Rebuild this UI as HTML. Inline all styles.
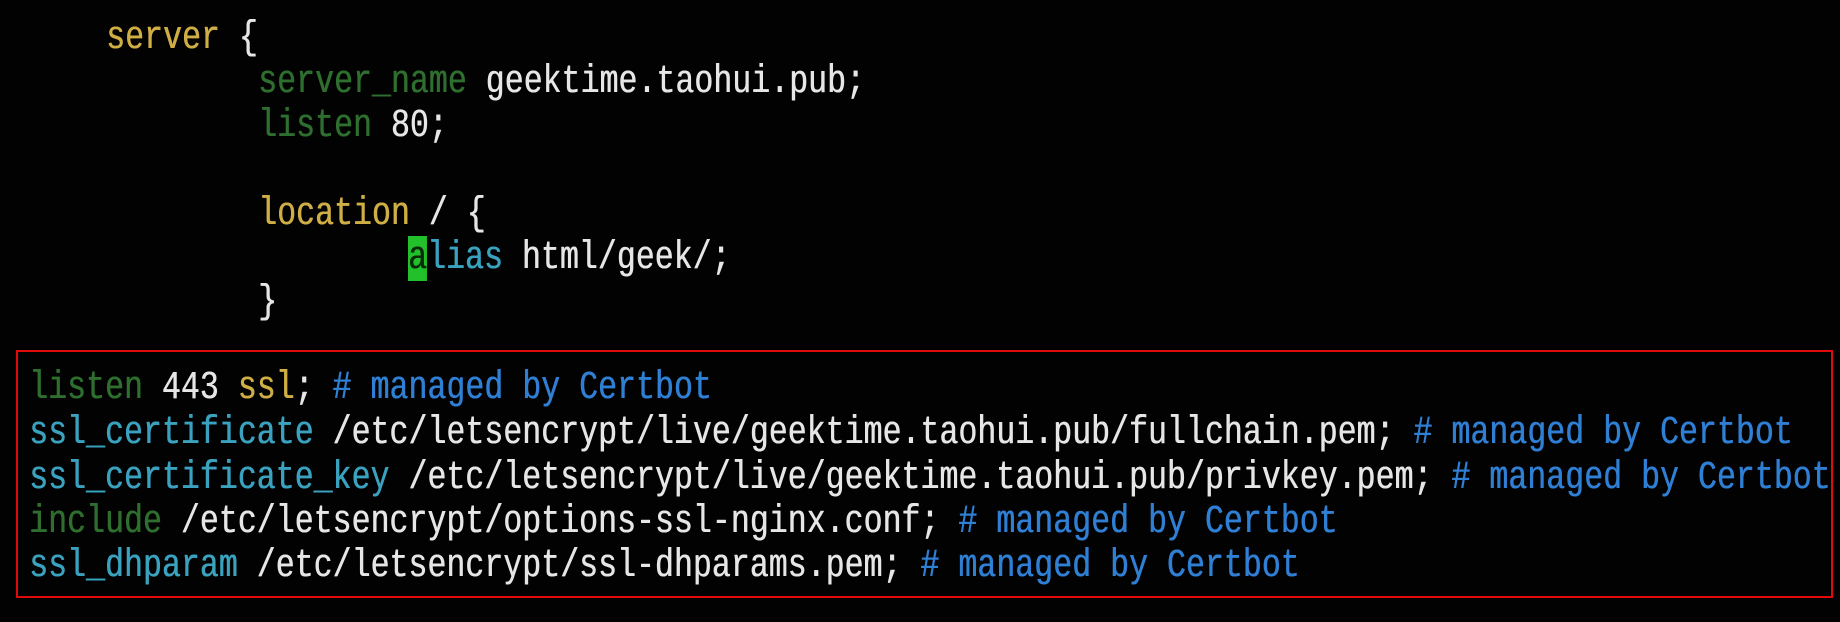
<!DOCTYPE html>
<html><head><meta charset="utf-8"><style>
html,body{margin:0;padding:0;background:#020202;width:1840px;height:622px;overflow:hidden}
.l{position:absolute;height:44px;line-height:44px;font-family:"Liberation Mono","DejaVu Sans Mono",monospace;font-size:40px;white-space:pre;color:#e6e6e6;transform:scaleX(0.79);transform-origin:0 50%;text-shadow:0.6px 0 0 currentColor}
.y{color:#cfae45}.g{color:#2e6e2e}.c{color:#3aa2bf}.b{color:#2f7fd4}
.cur{background:#22c02a;color:#0a2a0a}
#box{position:absolute;left:16px;top:350px;width:1813px;height:244px;border:2px solid #e00a0a}
</style></head><body>
<div class="l" style="left:106px;top:17px"><span class="y">server</span> {</div>
<div class="l" style="left:258px;top:61px"><span class="g">server_name</span> geektime.taohui.pub;</div>
<div class="l" style="left:258px;top:105px"><span class="g">listen</span> 80;</div>
<div class="l" style="left:258px;top:193px"><span class="y">location</span> / {</div>
<div class="l" style="left:408px;top:237px"><span class="cur">a</span><span class="c">lias</span> html/geek/;</div>
<div class="l" style="left:258px;top:281px">}</div>
<div id="box"></div>
<div class="l" style="left:29px;top:367px"><span class="g">listen</span> 443 <span class="y">ssl</span>; <span class="b"># managed by Certbot</span></div>
<div class="l" style="left:29px;top:412px"><span class="c">ssl_certificate</span> /etc/letsencrypt/live/geektime.taohui.pub/fullchain.pem; <span class="b"># managed by Certbot</span></div>
<div class="l" style="left:29px;top:457px"><span class="c">ssl_certificate_key</span> /etc/letsencrypt/live/geektime.taohui.pub/privkey.pem; <span class="b"># managed by Certbot</span></div>
<div class="l" style="left:29px;top:501px"><span class="g">include</span> /etc/letsencrypt/options-ssl-nginx.conf; <span class="b"># managed by Certbot</span></div>
<div class="l" style="left:29px;top:545px"><span class="c">ssl_dhparam</span> /etc/letsencrypt/ssl-dhparams.pem; <span class="b"># managed by Certbot</span></div>
</body></html>
